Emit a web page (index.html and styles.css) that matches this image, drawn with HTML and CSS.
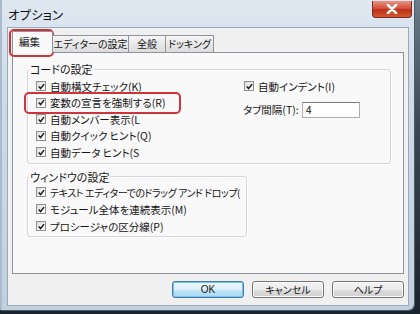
FILE: index.html
```html
<!DOCTYPE html>
<html lang="ja">
<head>
<meta charset="utf-8">
<title>オプション</title>
<link rel="stylesheet" href="styles.css">
</head>
<body>
<div class="desktop">
  <div class="window">
    <div class="titlebar">
      <span class="title">オプション</span>
      <span class="close"><svg width="12" height="10" viewBox="0 0 12 10"><path d="M2 1 L10 9 M10 1 L2 9" stroke="#fff" stroke-width="2.6" stroke-linecap="round"/></svg></span>
    </div>
    <div class="client">
      <div class="tabs">
        <span class="tab active">編集</span>
        <span class="tab t2">エディターの設定</span>
        <span class="tab t3">全般</span>
        <span class="tab t4">ドッキング</span>
      </div>
      <div class="panel">
        <fieldset class="group code">
          <legend>コードの設定</legend>
          <div class="code-body">
            <div class="col">
              <div class="row"><span class="cb"><svg viewBox="0 0 10 10"><path d="M2 5 L4.2 7.4 L8.3 2.2" fill="none" stroke="#1b1b1b" stroke-width="1.7"/></svg></span>自動構文チェック(K)</div>
              <div class="row"><span class="cb"><svg viewBox="0 0 10 10"><path d="M2 5 L4.2 7.4 L8.3 2.2" fill="none" stroke="#1b1b1b" stroke-width="1.7"/></svg></span>変数の宣言を強制する(R)</div>
              <div class="row"><span class="cb"><svg viewBox="0 0 10 10"><path d="M2 5 L4.2 7.4 L8.3 2.2" fill="none" stroke="#1b1b1b" stroke-width="1.7"/></svg></span>自動メンバー表示(L</div>
              <div class="row"><span class="cb"><svg viewBox="0 0 10 10"><path d="M2 5 L4.2 7.4 L8.3 2.2" fill="none" stroke="#1b1b1b" stroke-width="1.7"/></svg></span>自動クイック ヒント(Q)</div>
              <div class="row"><span class="cb"><svg viewBox="0 0 10 10"><path d="M2 5 L4.2 7.4 L8.3 2.2" fill="none" stroke="#1b1b1b" stroke-width="1.7"/></svg></span>自動データ ヒント(S</div>
            </div>
            <div class="col">
              <div class="row"><span class="cb"><svg viewBox="0 0 10 10"><path d="M2 5 L4.2 7.4 L8.3 2.2" fill="none" stroke="#1b1b1b" stroke-width="1.7"/></svg></span>自動インデント(I)</div>
              <div class="tabsize"><span class="tabsize-label">タブ間隔(T):</span><span class="input">4</span></div>
            </div>
          </div>
        </fieldset>
        <fieldset class="group winset">
          <legend>ウィンドウの設定</legend>
          <div class="win-body">
            <div class="row r17 tight"><span class="cb"><svg viewBox="0 0 10 10"><path d="M2 5 L4.2 7.4 L8.3 2.2" fill="none" stroke="#1b1b1b" stroke-width="1.7"/></svg></span>テキスト エディターでのドラッグ アンド ドロップ(</div>
            <div class="row r17"><span class="cb"><svg viewBox="0 0 10 10"><path d="M2 5 L4.2 7.4 L8.3 2.2" fill="none" stroke="#1b1b1b" stroke-width="1.7"/></svg></span>モジュール全体を連続表示(M)</div>
            <div class="row r17"><span class="cb"><svg viewBox="0 0 10 10"><path d="M2 5 L4.2 7.4 L8.3 2.2" fill="none" stroke="#1b1b1b" stroke-width="1.7"/></svg></span>プロシージャの区分線(P)</div>
          </div>
        </fieldset>
      </div>
      <div class="buttons">
        <span class="btn default">OK</span>
        <span class="btn">キャンセル</span>
        <span class="btn">ヘルプ</span>
      </div>
    </div>
    <div class="mark mark-tab"></div>
    <div class="mark mark-row"></div>
  </div>
</div>
</body>
</html>
```

FILE: styles.css
```css
html, body {
  margin: 0;
  padding: 0;
}
body {
  background: #27313b;
  font-family: "Noto Sans CJK JP", "Noto Sans", sans-serif;
  font-feature-settings: "palt";
  color: #151515;
}
.desktop {
  width: 420px;
  height: 314px;
  overflow: hidden;
  background: linear-gradient(180deg, #6d7c8a 0, #3b4752 40%, #1a242e 100%);
}
.window {
  position: relative;
  width: 414px;
  height: 310px;
  box-sizing: border-box;
  padding: 0 6px 5px 8px;
  display: flex;
  flex-direction: column;
  background: linear-gradient(180deg, #dfe8f1 0, #cfdbe7 30%, #c2d0de 100%);
  border-radius: 0 0 6px 0;
  box-shadow: inset 2px 0 0 #a9bbcd, 1px 1px 0 #4e5b68;
}
.titlebar {
  height: 28px;
  display: flex;
  justify-content: space-between;
  align-items: flex-start;
}
.title {
  font-size: 12.5px;
  line-height: 12px;
  margin: 9px 0 0 0;
  color: #111;
}
.close {
  width: 40px;
  height: 17px;
  margin: 1px -4px 0 0;
  box-sizing: border-box;
  border: 1px solid #7d2a22;
  border-top: none;
  border-radius: 0 0 4px 4px;
  background: linear-gradient(180deg, #e79585 0, #d4523d 45%, #bd3019 55%, #d4582f 100%);
  display: flex;
  align-items: center;
  justify-content: center;
}
.client {
  flex: 1;
  background: #f0f0f0;
  padding: 3px 4px 7px 4px;
  display: flex;
  flex-direction: column;
  box-shadow: 0 0 0 1px #97a9bc;
}
.tabs {
  height: 21px;
  display: flex;
  align-items: flex-end;
  position: relative;
  z-index: 1;
}
.tab {
  height: 17px;
  box-sizing: border-box;
  border: 1px solid #8c939c;
  border-bottom: none;
  margin-left: -1px;
  background: linear-gradient(180deg, #f6f6f6 0, #e8e8e8 50%, #dcdcdc 100%);
  font-size: 10px;
  line-height: 15px;
  text-align: center;
  white-space: nowrap;
}
.tab.active {
  margin-left: 0;
  width: 41px;
  height: 22px;
  margin-bottom: -1px;
  line-height: 20px;
  font-size: 10.5px;
  background: #f9f9f9;
  border-radius: 2px 2px 0 0;
  text-align: left;
  padding-left: 6px;
}
.tab.t2 { width: 77px; }
.tab.t3 { width: 38px; }
.tab.t4 { width: 49px; }
.panel {
  height: 222px;
  box-sizing: border-box;
  border: 1px solid #8c939c;
  background: #f9f9f9;
  padding: 0 13px 0 14px;
}
.group {
  margin: 0;
  padding: 0 0 0 1px;
  border: 1px solid #d2d7dc;
  border-radius: 3px;
  min-inline-size: 0;
  box-sizing: border-box;
  box-shadow: 1px 1px 0 #ffffff, inset 1px 1px 0 #ffffff;
}
.group legend {
  font-size: 11px;
  line-height: 12px;
  padding: 0 1px;
  margin: 0;
}
.code {
  margin-top: 10px;
  width: 364px;
}
.code-body {
  display: grid;
  grid-template-columns: 208px 1fr;
  padding: 3px 0 2px 7px;
}
.winset {
  margin-top: 7px;
  width: 220px;
}
.win-body {
  padding: 1px 0 1px 7px;
  overflow: hidden;
}
.row {
  height: 16.5px;
  display: flex;
  align-items: center;
  gap: 4px;
  font-size: 10.5px;
  white-space: nowrap;
}
.row.r17 {
  height: 17px;
}
.row.tight {
  font-size: 10px;
  letter-spacing: -0.45px;
}
.cb {
  flex: none;
  width: 10px;
  height: 10px;
  box-sizing: border-box;
  border: 1px solid #8e8f8f;
  background: linear-gradient(135deg, #dcdcdc 0, #f4f4f4 60%, #ffffff 100%);
  display: flex;
}
.cb svg {
  width: 9px;
  height: 9px;
  margin: -0.5px 0 0 -0.5px;
}
.tabsize {
  display: flex;
  align-items: center;
  margin-top: 7px;
  margin-left: -1px;
  gap: 3px;
  font-size: 10.5px;
}
.input {
  width: 58px;
  height: 16px;
  box-sizing: border-box;
  border: 1px solid #abadb3;
  border-top-color: #7a7d85;
  background: #ffffff;
  font-size: 10.5px;
  line-height: 14px;
  padding-left: 3px;
}
.buttons {
  margin-top: 7px;
  height: 17px;
  display: flex;
  justify-content: flex-end;
  gap: 8px;
}
.btn {
  width: 72px;
  height: 17px;
  box-sizing: border-box;
  border: 1px solid #767676;
  border-radius: 3px;
  background: linear-gradient(180deg, #f3f3f3 0, #ebebeb 50%, #dddddd 51%, #d0d0d0 100%);
  box-shadow: inset 0 0 0 1px #fbfbfb;
  font-size: 10px;
  line-height: 15px;
  text-align: center;
}
.btn.default {
  border-color: #3d7bad;
  background: linear-gradient(180deg, #ecf7fd 0, #dcf0fb 50%, #c2e4f6 51%, #a9d9f2 100%);
  box-shadow: inset 0 0 0 1px #7ec4e8;
  font-family: "Liberation Sans", "Noto Sans CJK JP", sans-serif;
}
.mark {
  position: absolute;
  border: 2px solid #d0343a;
  border-radius: 5px;
  box-sizing: border-box;
  pointer-events: none;
}
.mark-tab {
  left: 9px;
  top: 29px;
  width: 45px;
  height: 28px;
}
.mark-row {
  left: 24px;
  top: 92px;
  width: 157px;
  height: 22px;
}
```
